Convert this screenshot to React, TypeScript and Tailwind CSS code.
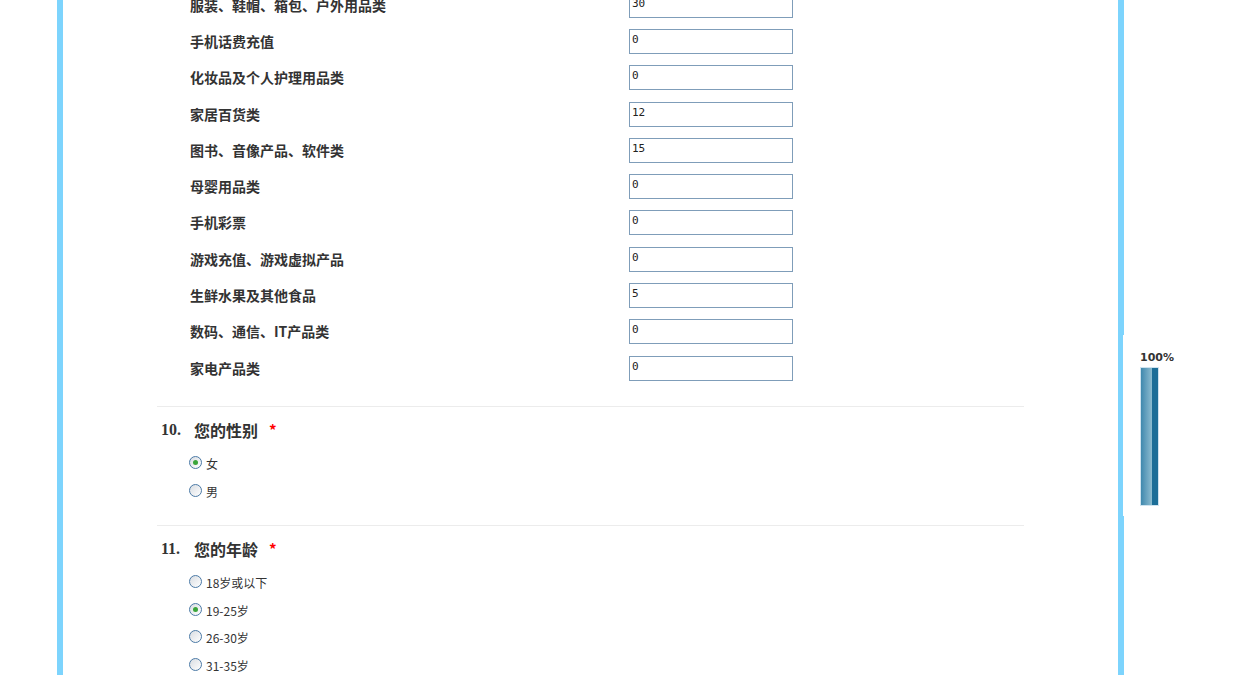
import React from "react";

const cats = [
  { name: "服装、鞋帽、箱包、户外用品类", value: "30" },
  { name: "手机话费充值", value: "0" },
  { name: "化妆品及个人护理用品类", value: "0" },
  { name: "家居百货类", value: "12" },
  { name: "图书、音像产品、软件类", value: "15" },
  { name: "母婴用品类", value: "0" },
  { name: "手机彩票", value: "0" },
  { name: "游戏充值、游戏虚拟产品", value: "0" },
  { name: "生鲜水果及其他食品", value: "5" },
  { name: "数码、通信、IT产品类", value: "0" },
  { name: "家电产品类", value: "0" },
];

const cjk = { fontFamily: '"Noto Sans CJK SC", "Noto Sans", sans-serif' };

function Radio({ label, checked }: { label: string; checked?: boolean }) {
  return (
    <label className="flex items-center h-[27.7px] pl-[32px]">
      <span className="relative flex items-center justify-center w-[13px] h-[13px] rounded-full border border-[#4b7aa6] bg-gradient-to-br from-[#d9dde2] to-white">
        {checked && <span className="w-[5px] h-[5px] rounded-full bg-[#3aa53a]" />}
      </span>
      <span className="ml-[4px] mt-[3px] text-[12px] text-[#333]" style={cjk}>
        {label}
      </span>
    </label>
  );
}

function Question({ no, title, options }: { no: string; title: string; options: { label: string; checked?: boolean }[] }) {
  return (
    <div className="border-t border-[#ececec]">
      <div className="flex items-center pt-[11px] pl-[4px] h-[35px] text-[16px] font-bold text-[#333]" style={cjk}>
        <span className="w-[33px]" style={{ fontFamily: '"Liberation Serif", serif' }}>{no}</span>
        <span>{title}</span>
        <span className="ml-[11px] text-[#ff0000] text-[15px]">*</span>
      </div>
      <div className="mt-[6.5px]">
        {options.map((o) => (
          <Radio key={o.label} label={o.label} checked={o.checked} />
        ))}
      </div>
    </div>
  );
}

export default function App() {
  return (
    <div className="relative w-[1242px] h-[675px] overflow-hidden bg-white">
      <div className="flow-root ml-[57px] w-[1067px] h-[675px] border-x-[6px] border-[#7dd4fd] bg-white">
        <div className="ml-[94px] w-[867px] mt-[-13px]">
          {cats.map((c) => (
            <div key={c.name} className="flex items-center h-[36.3px]">
              <div className="w-[472px] pl-[33px] text-[14px] font-bold text-[#333]" style={cjk}>
                {c.name}
              </div>
              <div className="w-[164px] h-[25px] border border-[#7f9db9] bg-white px-[2px] pt-[3px] text-[11px] leading-[14px] text-[#222]" style={{ fontFamily: '"DejaVu Sans Mono", monospace' }}>
                {c.value}
              </div>
            </div>
          ))}
          <div className="h-[20px]" />
          <Question
            no="10."
            title="您的性别"
            options={[{ label: "女", checked: true }, { label: "男" }]}
          />
          <div className="h-[21px]" />
          <Question
            no="11."
            title="您的年龄"
            options={[
              { label: "18岁或以下" },
              { label: "19-25岁", checked: true },
              { label: "26-30岁" },
              { label: "31-35岁" },
            ]}
          />
        </div>
      </div>

      <div className="absolute left-[1123px] top-[335px] w-[60px] h-[181px] bg-white">
        <div className="absolute left-[17px] top-[15px] text-[11px] font-bold text-[#333]" style={{ fontFamily: '"DejaVu Sans", sans-serif' }}>
          100%
        </div>
        <div className="absolute left-[17px] top-[32px] w-[19px] h-[139px] border border-[#cfe3ef] flex">
          <div className="w-[11px] h-full bg-gradient-to-r from-[#3f89ae] to-[#8cbcd0]" />
          <div className="flex-1 h-full bg-[#1c6e98]" />
        </div>
      </div>
    </div>
  );
}
